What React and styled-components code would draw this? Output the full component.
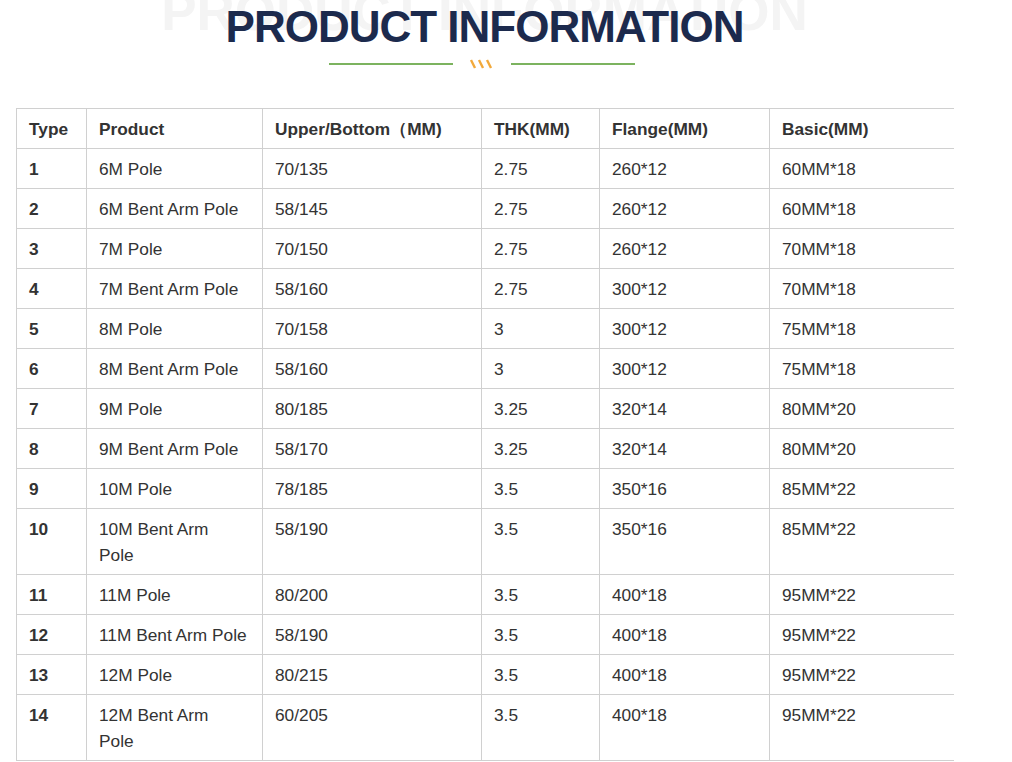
import React from 'react';
import styled, { createGlobalStyle } from 'styled-components';

const GlobalStyle = createGlobalStyle`
  body {
    margin: 0;
    background: #fff;
    font-family: 'Liberation Sans', Arial, sans-serif;
  }
`

const Page = styled.div`
  padding: 0 0 0 16px;
  width: 937px;
`

const Heading = styled.div`
  position: relative;
  height: 108px;
  display: flex;
  flex-direction: column;
  align-items: center;
  overflow: hidden;
`

const Ghost = styled.div`
  position: absolute;
  top: -18px;
  left: 0;
  right: 0;
  text-align: center;
  font-size: 53px;
  font-weight: 700;
  color: #f4f4f4;
  white-space: nowrap;
  line-height: 60px;
`

const Title = styled.h2`
  position: relative;
  margin: 4px 0 0;
  font-size: 44px;
  line-height: 46px;
  font-weight: 700;
  letter-spacing: -1px;
  color: #1c2a4d;
  white-space: nowrap;
`

const Divider = styled.div`
  display: flex;
  align-items: center;
  gap: 16px;
  margin-top: 9px;
  margin-left: -6px;
`

const Line = styled.span`
  display: block;
  width: 124px;
  height: 2px;
  background: #7cb35f;
`

const Table = styled.table`
  border-collapse: collapse;
  table-layout: fixed;
  width: 937px;
  font-size: 17.3px;
  color: #333;
`

const Cell = styled.td`
  border: 1px solid #d0d0d0;
  border-right: ${p => (p.$last ? 'none' : '1px solid #d0d0d0')};
  padding: 7px 10px 6px 12px;
  line-height: 26px;
  vertical-align: top;
  white-space: nowrap;
  font-weight: ${p => (p.$bold ? 700 : 400)};
  overflow: hidden;
`

const widths = [70, 176, 219, 118, 170, 184];
const head = ['Type', 'Product', 'Upper/Bottom（MM)', 'THK(MM)', 'Flange(MM)', 'Basic(MM)'];

const rows = [
  ['1', '6M Pole', '70/135', '2.75', '260*12', '60MM*18'],
  ['2', '6M Bent Arm Pole', '58/145', '2.75', '260*12', '60MM*18'],
  ['3', '7M Pole', '70/150', '2.75', '260*12', '70MM*18'],
  ['4', '7M Bent Arm Pole', '58/160', '2.75', '300*12', '70MM*18'],
  ['5', '8M Pole', '70/158', '3', '300*12', '75MM*18'],
  ['6', '8M Bent Arm Pole', '58/160', '3', '300*12', '75MM*18'],
  ['7', '9M Pole', '80/185', '3.25', '320*14', '80MM*20'],
  ['8', '9M Bent Arm Pole', '58/170', '3.25', '320*14', '80MM*20'],
  ['9', '10M Pole', '78/185', '3.5', '350*16', '85MM*22'],
  ['10', ['10M Bent Arm', 'Pole'], '58/190', '3.5', '350*16', '85MM*22'],
  ['11', '11M Pole', '80/200', '3.5', '400*18', '95MM*22'],
  ['12', '11M Bent Arm Pole', '58/190', '3.5', '400*18', '95MM*22'],
  ['13', '12M Pole', '80/215', '3.5', '400*18', '95MM*22'],
  ['14', ['12M Bent Arm', 'Pole'], '60/205', '3.5', '400*18', '95MM*22'],
];

const Slashes = () => (
  <svg width="26" height="10" viewBox="0 0 26 10">
    <g stroke="#f2a93b" strokeWidth="2.4" strokeLinecap="butt">
      <line x1="2" y1="1" x2="6" y2="9" />
      <line x1="10" y1="1" x2="14" y2="9" />
      <line x1="18" y1="1" x2="22" y2="9" />
    </g>
  </svg>
);

const show = v => (Array.isArray(v) ? v.map((s, i) => (
  <React.Fragment key={i}>{i > 0 && <br />}{s}</React.Fragment>
)) : v);

export default function App() {
  return (
    <Page>
      <GlobalStyle />
      <Heading>
        <Ghost>PRODUCT INFORMATION</Ghost>
        <Title>PRODUCT INFORMATION</Title>
        <Divider>
          <Line />
          <Slashes />
          <Line />
        </Divider>
      </Heading>
      <Table>
        <colgroup>
          {widths.map((w, i) => <col key={i} style={{ width: w }} />)}
        </colgroup>
        <tbody>
          <tr>
            {head.map((h, i) => <Cell key={i} $bold $last={i === 5}>{h}</Cell>)}
          </tr>
          {rows.map((r, ri) => (
            <tr key={ri}>
              {r.map((v, i) => (
                <Cell key={i} $bold={i === 0} $last={i === 5}>{show(v)}</Cell>
              ))}
            </tr>
          ))}
        </tbody>
      </Table>
    </Page>
  );
}
